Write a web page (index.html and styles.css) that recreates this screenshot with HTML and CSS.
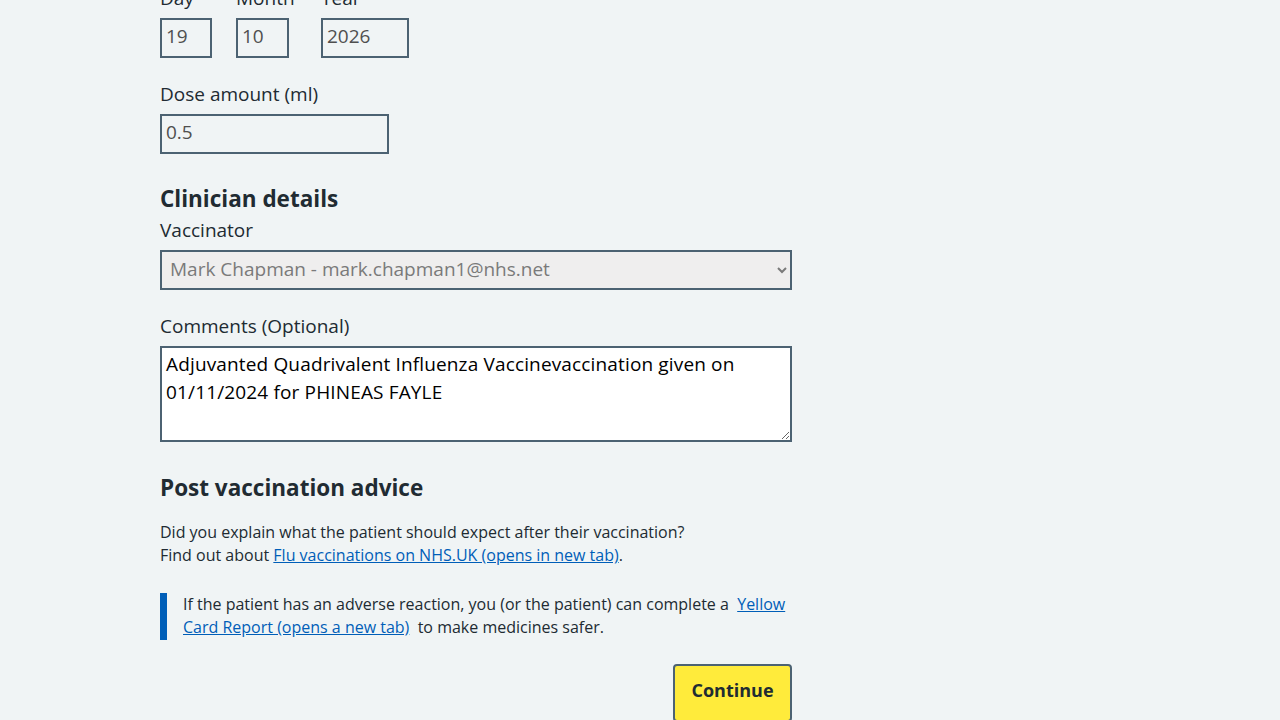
FILE: index.html
```html
<!DOCTYPE html>
<html lang="en">
<head>
<meta charset="utf-8">
<title>Record vaccination</title>
<link rel="stylesheet" href="styles.css">
</head>
<body>
<main class="page">
  <div class="date-group">
    <div class="date-item">
      <label class="label" for="day">Day</label>
      <input class="input w-day" id="day" type="text" value="19" disabled>
    </div>
    <div class="date-item date-item-month">
      <label class="label" for="month">Month</label>
      <input class="input w-month" id="month" type="text" value="10" disabled>
    </div>
    <div class="date-item">
      <label class="label" for="year">Year</label>
      <input class="input w-year" id="year" type="text" value="2026" disabled>
    </div>
  </div>

  <div class="form-group">
    <label class="label" for="dose">Dose amount (ml)</label>
    <input class="input w-dose" id="dose" type="text" value="0.5" disabled>
  </div>

  <h2 class="heading heading-clinician">Clinician details</h2>
  <div class="form-group">
    <label class="label" for="vaccinator">Vaccinator</label>
    <select class="select" id="vaccinator" disabled>
      <option>Mark Chapman - mark.chapman1@nhs.net</option>
    </select>
  </div>

  <div class="form-group form-group-last">
    <label class="label" for="comments">Comments (Optional)</label>
    <textarea class="textarea" id="comments" rows="3">Adjuvanted Quadrivalent Influenza Vaccinevaccination given on 01/11/2024 for PHINEAS FAYLE</textarea>
  </div>

  <h2 class="heading heading-advice">Post vaccination advice</h2>
  <p class="body">Did you explain what the patient should expect after their vaccination?<br>Find out about <a class="link" href="#">Flu vaccinations on NHS.UK (opens in new tab)</a>.</p>

  <div class="inset">
    <p class="body">If the patient has an adverse reaction, you (or the patient) can complete a&nbsp; <a class="link" href="#">Yellow Card Report (opens a new tab)</a>&nbsp; to make medicines safer.</p>
  </div>

  <div class="actions">
    <button class="button" type="button">Continue</button>
  </div>
</main>
</body>
</html>
```

FILE: styles.css
```css
html, body {
  margin: 0;
  padding: 0;
  background: #f0f4f5;
  color: #212b32;
  font-family: "Open Sans", "Noto Sans", sans-serif;
  overflow: hidden;
}

.page {
  width: 632px;
  margin: -14px 0 0 160px;
}

.label {
  display: block;
  font-size: 19px;
  line-height: 24px;
  padding-bottom: 4px;
  margin-bottom: 4px;
  color: #212b32;
}

.date-group {
  display: flex;
  gap: 24px;
  margin-bottom: 24px;
}

.date-item {
  display: flex;
  flex-direction: column;
  align-items: flex-start;
}

.date-item-month {
  min-width: 61px;
}

.input {
  box-sizing: border-box;
  height: 40px;
  border: 2px solid #4c6272;
  background: transparent;
  color: #4f4f4f;
  font-family: inherit;
  font-size: 19px;
  padding: 0 4px 4px;
  margin: 0;
  border-radius: 0;
  opacity: 1;
}

.w-day { width: 52px; }
.w-month { width: 53px; }
.w-year { width: 88px; }
.w-dose { width: 229px; }

.form-group {
  margin-bottom: 24px;
}

.form-group-last {
  margin-bottom: 0;
}

.heading {
  font-size: 22.5px;
  line-height: 32px;
  font-weight: 700;
  margin: 0;
}

.heading-clinician {
  margin-top: 29px;
  margin-bottom: 3px;
}

.select {
  display: block;
  box-sizing: border-box;
  width: 632px;
  height: 40px;
  border: 2px solid #4c6272;
  background-color: #efeeee;
  color: #7a7a7a;
  opacity: 1;
  font-family: inherit;
  font-size: 19px;
  padding: 0 4px 2px;
  border-radius: 0;
  margin: 0;
}

.textarea {
  display: block;
  box-sizing: border-box;
  width: 632px;
  height: 96px;
  border: 2px solid #4c6272;
  background: #fff;
  color: #000;
  font-family: inherit;
  font-size: 19px;
  letter-spacing: 0.15px;
  line-height: 28px;
  padding: 2px 4px;
  margin: 0;
  border-radius: 0;
  resize: vertical;
}

.heading-advice {
  margin-top: 30px;
  margin-bottom: 17px;
}

.body {
  font-size: 16px;
  line-height: 23px;
  margin: 0;
}

.link {
  color: #005eb8;
  text-decoration: underline;
}

.inset {
  margin-top: 26px;
  border-left: 7px solid #005eb8;
  padding: 0 0 1px 16px;
}

.actions {
  display: flex;
  justify-content: flex-end;
  margin-top: 24px;
}

.button {
  background: #ffeb3b;
  color: #212b32;
  border: 2px solid #4c6272;
  border-radius: 4px;
  font-family: inherit;
  font-size: 18px;
  font-weight: 700;
  line-height: 28px;
  padding: 10px 16px 16px;
  width: 119px;
}
```
